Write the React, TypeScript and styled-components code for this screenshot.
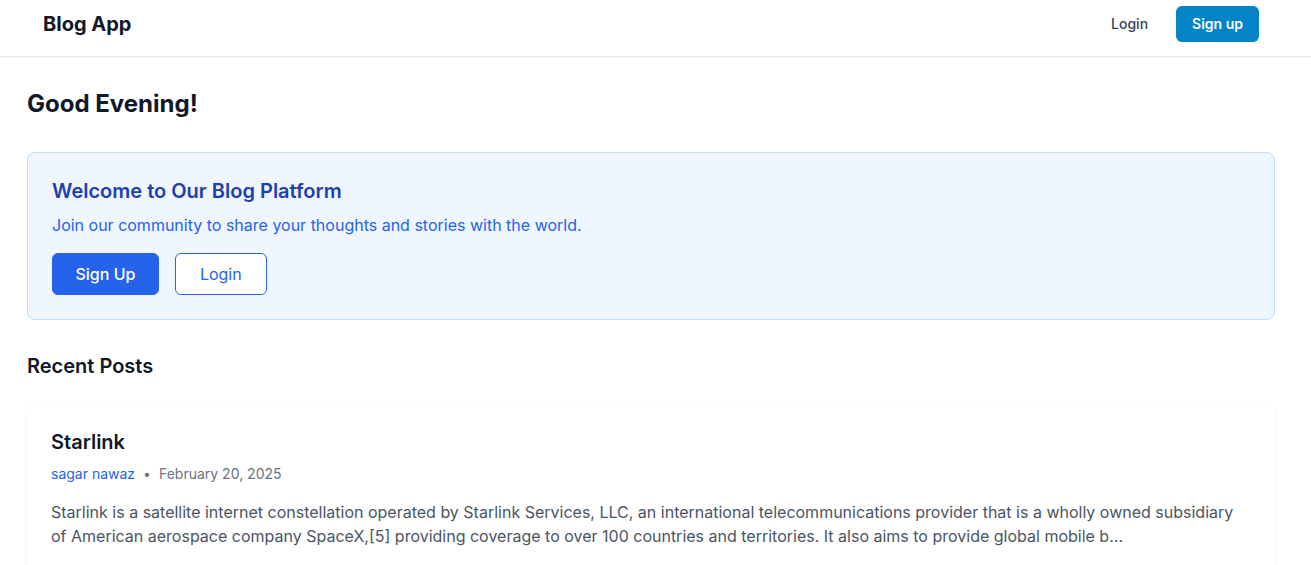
import React from "react";
import styled, { createGlobalStyle } from "styled-components";

const Global = createGlobalStyle`
  * { box-sizing: border-box; }
  body { margin: 0; font-family: Inter, "Noto Sans", Arial, sans-serif; background: #ffffff; color: #111827; }
  h1, h2, h3, p { margin: 0; }
`;

const Nav = styled.header`
  height: 57px;
  border-bottom: 1px solid #e5e7eb;
  box-shadow: 0 1px 2px rgba(0,0,0,0.04);
  display: flex;
  align-items: center;
  justify-content: space-between;
  padding: 0 52px 0 43px;
`;

const Brand = styled.div`
  font-size: 20px;
  font-weight: 700;
  color: #111827;
  line-height: 28px;
  margin-top: -9px;
`;

const NavActions = styled.div`
  display: flex;
  align-items: center;
  gap: 12px;
  margin-top: -9px;
`;

const NavButton = styled.button<{ $primary?: boolean }>`
  font-family: inherit;
  font-size: 14px;
  line-height: 20px;
  padding: 8px 16px;
  border-radius: 6px;
  border: none;
  cursor: pointer;
  font-weight: ${(p) => (p.$primary ? 600 : 500)};
  background: ${(p) => (p.$primary ? "#0284c7" : "transparent")};
  color: ${(p) => (p.$primary ? "#ffffff" : "#374151")};
`;

const Main = styled.main`
  padding: 31px 36px 0 27px;
`;

const Greeting = styled.h1`
  font-size: 24px;
  line-height: 32px;
  font-weight: 700;
  color: #111827;
  margin-bottom: 32px;
`;

const WelcomeCard = styled.section`
  background: #eff6ff;
  border: 1px solid #bfdbfe;
  border-radius: 8px;
  padding: 24px;
  margin-bottom: 32px;
`;

const WelcomeTitle = styled.h2`
  font-size: 20px;
  line-height: 28px;
  font-weight: 600;
  color: #1e40af;
  margin-bottom: 8px;
`;

const WelcomeText = styled.p`
  font-size: 16px;
  line-height: 24px;
  color: #2563eb;
  margin-bottom: 16px;
`;

const ButtonRow = styled.div`
  display: flex;
  gap: 16px;
`;

const CtaButton = styled.button<{ $outline?: boolean }>`
  font-family: inherit;
  font-size: 16px;
  line-height: 24px;
  font-weight: ${(p) => (p.$outline ? 400 : 500)};
  height: 42px;
  padding: 0 ${(p) => (p.$outline ? "24px" : "22.5px")};
  border-radius: 6px;
  cursor: pointer;
  background: ${(p) => (p.$outline ? "#ffffff" : "#2563eb")};
  color: ${(p) => (p.$outline ? "#2563eb" : "#ffffff")};
  border: 1px solid #2563eb;
`;

const SectionTitle = styled.h2`
  font-size: 20px;
  line-height: 28px;
  font-weight: 600;
  color: #111827;
  margin-bottom: 24px;
`;

const PostCard = styled.article`
  background: #ffffff;
  border-radius: 8px;
  box-shadow: 0 1px 3px rgba(0,0,0,0.06), 0 1px 2px rgba(0,0,0,0.03);
  padding: 24px;
`;

const PostTitle = styled.h3`
  font-size: 20px;
  line-height: 28px;
  font-weight: 600;
  color: #111827;
  margin-bottom: 8px;
`;

const Meta = styled.div`
  display: flex;
  align-items: center;
  gap: 8px;
  font-size: 14px;
  line-height: 20px;
  color: #6b7280;
  margin-bottom: 16px;
`;

const Author = styled.span`
  color: #2563eb;
`;

const Dot = styled.span`
  color: #6b7280;
`;

const Excerpt = styled.p`
  font-size: 16px;
  line-height: 24px;
  color: #4b5563;
`;

export default function App() {
  return (
    <>
      <Global />
      <Nav>
        <Brand>Blog App</Brand>
        <NavActions>
          <NavButton>Login</NavButton>
          <NavButton $primary>Sign up</NavButton>
        </NavActions>
      </Nav>
      <Main>
        <Greeting>Good Evening!</Greeting>
        <WelcomeCard>
          <WelcomeTitle>Welcome to Our Blog Platform</WelcomeTitle>
          <WelcomeText>Join our community to share your thoughts and stories with the world.</WelcomeText>
          <ButtonRow>
            <CtaButton>Sign Up</CtaButton>
            <CtaButton $outline>Login</CtaButton>
          </ButtonRow>
        </WelcomeCard>
        <SectionTitle>Recent Posts</SectionTitle>
        <PostCard>
          <PostTitle>Starlink</PostTitle>
          <Meta>
            <Author>sagar nawaz</Author>
            <Dot>•</Dot>
            <span>February 20, 2025</span>
          </Meta>
          <Excerpt>
            Starlink is a satellite internet constellation operated by Starlink Services, LLC, an international telecommunications provider that is a wholly owned subsidiary of American aerospace company SpaceX,[5] providing coverage to over 100 countries and territories. It also aims to provide global mobile b...
          </Excerpt>
        </PostCard>
      </Main>
    </>
  );
}
